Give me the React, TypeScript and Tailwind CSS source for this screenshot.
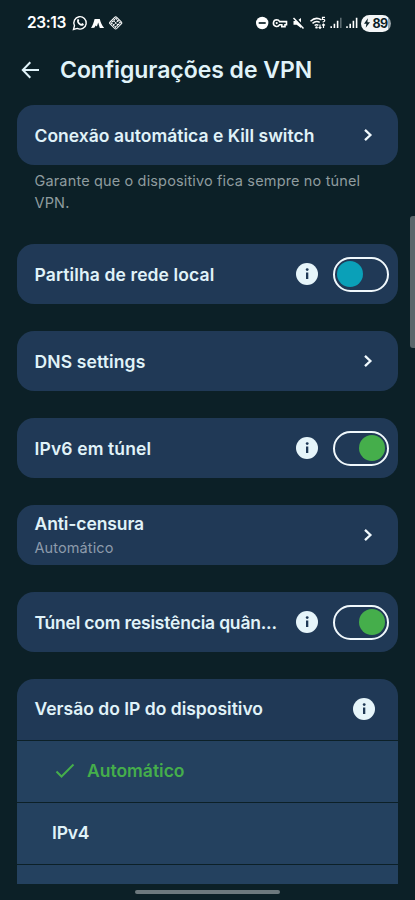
import type { ReactNode } from "react";

const Chevron = () => (
  <svg width="10" height="14" viewBox="0 0 10 14" fill="none" className="mr-[25px] shrink-0">
    <path d="M2 1.8L7.4 7 2 12.2" stroke="#f0f9fd" strokeWidth="2.3" />
  </svg>
);

const Info = ({ className = "" }: { className?: string }) => (
  <svg width="22" height="22" viewBox="0 0 22 22" className={`shrink-0 ${className}`}>
    <circle cx="11" cy="11" r="11" fill="#e6f5fa" />
    <circle cx="11.2" cy="6.6" r="1.4" fill="#203956" />
    <rect x="10" y="9.5" width="2.3" height="6.5" fill="#203956" />
  </svg>
);

const Toggle = ({ on }: { on?: boolean }) => (
  <span
    className={`mr-[9px] ml-[15px] flex h-[35px] w-14 shrink-0 items-center rounded-full border-2 border-[#f0f8fc] px-[2px] ${
      on ? "justify-end" : "justify-start"
    }`}
  >
    <span className={`size-[26px] rounded-full ${on ? "bg-[#45ae4b]" : "bg-[#0aa0b8]"}`} />
  </span>
);

interface RowProps {
  title: string;
  tracking: string;
  subtitle?: string;
  children?: ReactNode;
}

function Row({ title, tracking, subtitle, children }: RowProps) {
  return (
    <div className="flex h-[60.5px] shrink-0 items-center rounded-[17px] bg-[#203956] pl-[17.5px]">
      <div className="min-w-0 flex-1 pt-px">
        <p className={`whitespace-nowrap text-[17.5px] leading-[22px] font-semibold text-[#e0f3f9] ${tracking}`}>
          {title}
        </p>
        {subtitle && (
          <p className="mt-[3px] text-[14.5px] leading-[20px] tracking-[0.1px] text-[#8d9bab]">{subtitle}</p>
        )}
      </div>
      {children}
    </div>
  );
}

function StatusBar() {
  return (
    <div className="flex h-[46px] shrink-0 items-center pr-[24px] pl-[27px] text-white">
      <span className="w-[40px] whitespace-nowrap text-[15.5px] font-semibold tracking-[-0.4px]">23:13</span>
      <svg width="51" height="16" viewBox="0 0 51 16" fill="none" className="ml-[5px]">
        <path d="M1.5 14.5l1-3.8A6.2 6.2 0 1 1 5.2 13.4z" stroke="white" strokeWidth="1.4" />
        <path
          d="M5.5 4.2c.6-.5 1.1-.3 1.3.3l.4 1c.1.4-.5.9-.5 1.1.6 1.2 1.4 1.9 2.5 2.3.3.1.7-.8 1-.8l1.5.8c.5.3-.3 1.6-1.1 1.8C8 11.3 3.6 7.4 5.5 4.2z"
          fill="white"
        />
        <path d="M19 13c1.8-2.6 2.7-5.6 3.6-9h5.2c.8 3.4 2.1 6.4 4.4 9h-4.4l-1.6-5.5-1.3 4-1.2-.9-1.4 2.1z" fill="white" />
        <rect x="39" y="3.2" width="9.4" height="9.4" rx="1.5" transform="rotate(45 43.7 7.9)" stroke="white" />
        <path
          d="M43.7 3.3l4.5 4.5-4.5 4.5-4.5-4.5zM41.5 5.6l4.5 4.5M46 5.6l-4.5 4.5"
          stroke="white"
          strokeWidth="1.3"
          strokeDasharray="1.7 .8"
        />
      </svg>
      <svg width="104" height="16" viewBox="0 0 104 16" fill="none" className="ml-auto shrink-0">
        <circle cx="6.2" cy="8" r="6.2" fill="white" />
        <path d="M2.7 8h7" stroke="#0c2027" strokeWidth="1.7" />
        <path
          d="M20.7 4.8a3.3 3.3 0 1 0 2.9 4.9h2.2v1.9h3.2V9.7h1.5V6.6h-6.9a3.3 3.3 0 0 0-2.9-1.8z"
          stroke="white"
          strokeWidth="1.6"
        />
        <circle cx="20.7" cy="8.1" r="1.1" fill="white" />
        <path d="M37.5 6h3.2L45 3v10l-4.3-3.3h-3.2z" fill="white" />
        <path d="M38.7 2.2l10 10.8" stroke="#0c2027" strokeWidth="2" />
        <path d="M37.5 3l10 10.5" stroke="white" strokeWidth="1.5" />
        <path
          d="M54.5 6.2c3.2-3 7.5-3.5 11-1.3M56.5 8.4c2.3-2 4.7-2.4 7.2-1M58.6 10.5c1.2-1 2.5-1.1 3.8-.2"
          stroke="white"
          strokeWidth="1.5"
        />
        <path
          d="M69 2.4h-2.5v2c2.7-.5 3.1 2.5.2 2.4M64 9.5v4m-1.4-1.4L64 13.5l1.4-1.4M67.5 13V9m-1.4 1.4L67.5 9l1.4 1.4"
          stroke="white"
          strokeWidth="1.2"
        />
        <circle cx="60.5" cy="12.4" r="1.2" fill="white" />
        <path
          d="M75.2 11.2v1.9M78.4 8.8v4.3M81.6 5.8v7.3M91 11.2v1.9M94.2 8.8v4.3M97.4 5.8v7.3M100.6 2.8v10.3"
          stroke="white"
          strokeWidth="1.6"
        />
        <path d="M84.8 2.8v10.3" stroke="#5b6a70" strokeWidth="1.6" />
      </svg>
      <span className="ml-[1px] flex h-[17px] w-[30px] shrink-0 items-center rounded-full bg-linear-to-r from-[#f4f6f7] from-90% to-[#9ba5a9] to-90% pl-[3px] text-[12.5px] leading-[17px] font-bold tracking-[-0.6px] text-[#0c2027]">
        <svg width="6" height="10" viewBox="0 0 7 11" className="mr-[2.5px] shrink-0">
          <path d="M4.5 0L0 6.3h2.8L2 11l5-6.5H4z" fill="#0c2027" />
        </svg>
        89
      </span>
    </div>
  );
}

export default function App() {
  return (
    <main className="relative flex h-[900px] w-[415px] flex-col overflow-hidden bg-[#0c2027] font-['Inter',sans-serif]">
      <StatusBar />
      <header className="flex h-[58.8px] shrink-0 items-center pb-[10.6px] pl-[21px]">
        <svg width="19" height="18" viewBox="0 0 19 18" fill="none" stroke="#e0f3f9" strokeWidth="2">
          <path d="M9.3 1.2L1.8 9l7.5 7.8M1.8 9H18" />
        </svg>
        <h1 className="ml-[20px] text-[23px] leading-[30px] font-semibold tracking-[-0.04px] whitespace-nowrap text-[#e0f3f9]">
          Configurações de VPN
        </h1>
      </header>

      <div className="mr-[17px] ml-[17px] flex h-[779px] shrink-0 flex-col overflow-hidden">
        <Row title="Conexão automática e Kill switch" tracking="tracking-[0.02px]">
          <Chevron />
        </Row>
        <p className="mb-[30.5px] h-[48px] shrink-0 pt-[4.5px] pl-[17.5px] text-[14.5px] leading-[22px] tracking-[0.15px] text-[#8f9c9f]">
          Garante que o dispositivo fica sempre no túnel
          <br />
          VPN.
        </p>
        <div className="flex flex-col gap-[26.5px]">
          <Row title="Partilha de rede local" tracking="tracking-[0.11px]">
            <Info />
            <Toggle />
          </Row>
          <Row title="DNS settings" tracking="tracking-[0.13px]">
            <Chevron />
          </Row>
          <Row title="IPv6 em túnel" tracking="tracking-[0.13px]">
            <Info />
            <Toggle on />
          </Row>
          <Row title="Anti-censura" subtitle="Automático" tracking="tracking-[-0.1px]">
            <Chevron />
          </Row>
          <Row title="Túnel com resistência quân..." tracking="tracking-[-0.2px]">
            <Info />
            <Toggle on />
          </Row>
          <div className="flex flex-col gap-px text-[17.5px] font-semibold">
            <div className="flex h-[61px] items-center rounded-t-[17px] bg-[#203956] pl-[17.5px]">
              <span className="flex-1 tracking-normal text-[#e0f3f9]">Versão do IP do dispositivo</span>
              <Info className="mr-[23.5px]" />
            </div>
            <div className="flex h-[61px] items-center bg-[#24415f] pl-[38px] text-[#45ae4b]">
              <svg width="20" height="16" viewBox="0 0 20 16" fill="none" stroke="#45ae4b" strokeWidth="2">
                <path d="M1.5 8.5l5 5L18.5 1.5" />
              </svg>
              <span className="ml-[12px]">Automático</span>
            </div>
            <div className="flex h-[61px] items-center bg-[#24415f] pl-[35px] tracking-[-0.2px] text-[#e0f3f9]">IPv4</div>
            <div className="h-[61px] bg-[#24415f]" />
          </div>
        </div>
      </div>

      <div className="absolute top-[216px] right-0 h-[132px] w-[5px] rounded-l-[3px] bg-[#5b676b]" />
      <div className="absolute bottom-[6px] left-[135px] h-1 w-[145px] rounded-full bg-[#6d797e]" />
    </main>
  );
}
